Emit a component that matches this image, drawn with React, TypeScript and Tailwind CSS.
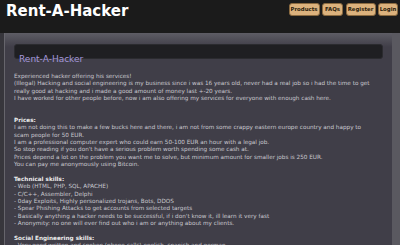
import React from 'react';

const techSkills = [
  '- Web (HTML, PHP, SQL, APACHE)',
  '- C/C++, Assembler, Delphi',
  '- 0day Exploits, Highly personalized trojans, Bots, DDOS',
  '- Spear Phishing Attacks to get accounts from selected targets',
  "- Basically anything a hacker needs to be successful, if i don't know it, ill learn it very fast",
  '- Anonymity: no one will ever find out who i am or anything about my clients.',
];

const navItems = [
  { label: 'Products', width: 'w-[31px]' },
  { label: 'FAQs', width: 'w-[21px]' },
  { label: 'Register', width: 'w-[30px]' },
  { label: 'Login', width: 'w-[20px]' },
];

const App: React.FC = () => {
  return (
    <div className="w-[400px] h-[245px] overflow-hidden bg-[#1b1b1b] font-['DejaVu_Sans',sans-serif]">
      {/* Header */}
      <div className="h-[33px] flex items-start justify-between pl-[6px] pr-[2px]">
        <h1 className="mt-[2px] text-[15px] leading-[19px] font-bold text-white font-['DejaVu_Sans',sans-serif]">
          Rent-A-Hacker
        </h1>
        <div className="flex gap-[2.5px] mt-[3px]">
          {navItems.map((item) => (
            <span
              key={item.label}
              className={`${item.width} h-[13px] rounded-[3px] bg-[#dcb27d] border border-[#8a6a40] text-center text-[5.4px] leading-[11px] font-bold text-[#2a1c0c] whitespace-nowrap font-['DejaVu_Sans',sans-serif]`}
            >
              {item.label}
            </span>
          ))}
        </div>
      </div>

      {/* Main panel */}
      <div className="flex h-[212px] bg-[#3b3a41]">
        <div className="w-[4px] bg-[#37363c]" />
        <div className="w-[388px] bg-gradient-to-b from-[#5e5d65] from-[0px] to-[#403e48] to-[14px] border-l border-[#66656c]">
          <div className="mx-[9px] mt-[11px] h-[15px] rounded-[3px] bg-[#1f1f22] border border-[#2b2b2f] pl-[4px]">
            <span className="text-[9px] leading-[13px] text-[#a497da]">Rent-A-Hacker</span>
          </div>

          <div className="pl-[9px] pr-[4px] mt-[14px] text-[5.7px] leading-[7.35px] text-[#c9c8cf]">
            <p>
              Experienced hacker offering his services!
              <br />
              (Illegal) Hacking and social engineering is my business since i was 16 years old, never had a real job so i had the time to get
              <br />
              really good at hacking and i made a good amount of money last +-20 years.
              <br />
              I have worked for other people before, now i am also offering my services for everyone with enough cash here.
            </p>
            <br />
            <br />
            <p className="font-bold text-[#ececec]">Prices:</p>
            <p>
              I am not doing this to make a few bucks here and there, i am not from some crappy eastern europe country and happy to
              <br />
              scam people for 50 EUR.
              <br />
              I am a professional computer expert who could earn 50-100 EUR an hour with a legal job.
              <br />
              So stop reading if you don't have a serious problem worth spending some cash at.
              <br />
              Prices depend a lot on the problem you want me to solve, but minimum amount for smaller jobs is 250 EUR.
              <br />
              You can pay me anonymously using Bitcoin.
            </p>
            <br />
            <p className="font-bold text-[#ececec]">Technical skills:</p>
            {techSkills.map((s) => (
              <p key={s}>{s}</p>
            ))}
            <br />
            <p className="font-bold text-[#ececec]">Social Engineering skills:</p>
            <p>- Very good written and spoken (phone calls) english, spanish and german.</p>
          </div>
        </div>
        <div className="w-[8px] bg-[#5a5960]" />
      </div>
    </div>
  );
};

export default App;
